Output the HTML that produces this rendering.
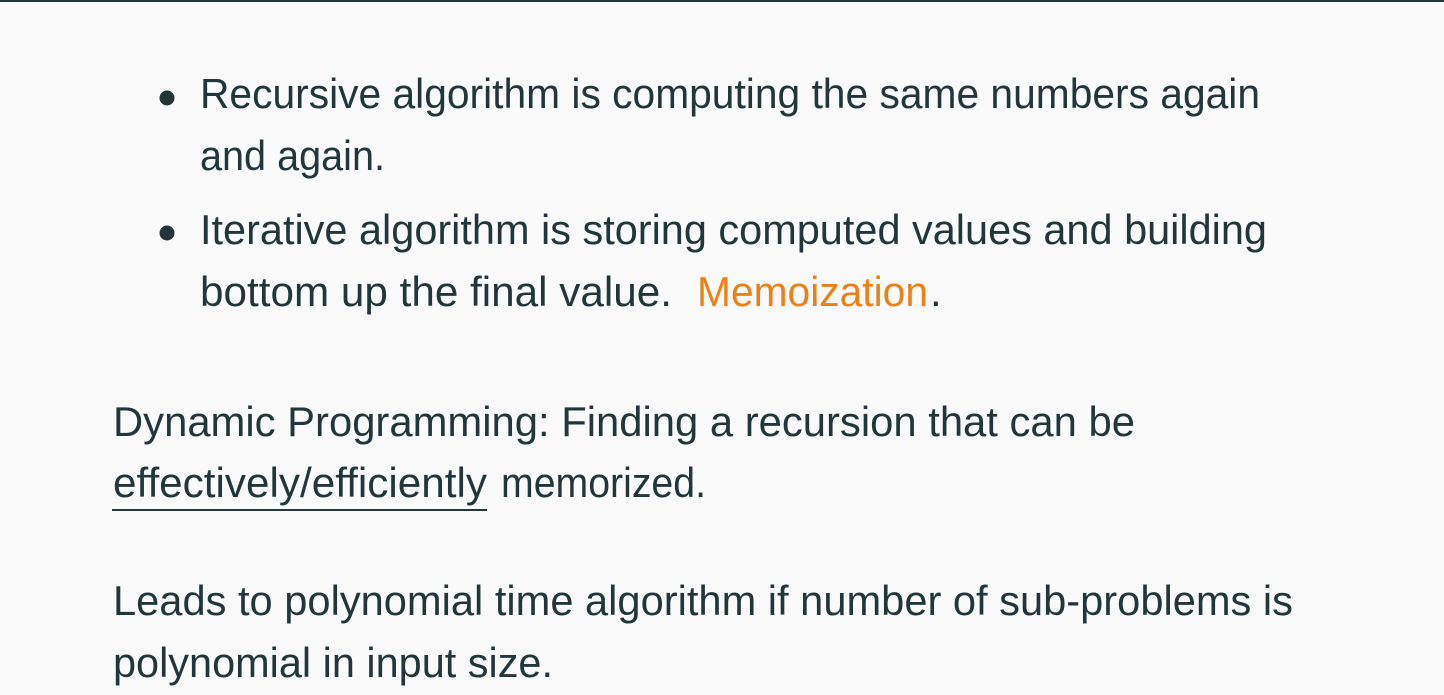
<!DOCTYPE html>
<html><head><meta charset="utf-8"><style>
html,body{margin:0;padding:0;background:#fafafa;}
svg{display:block}
text{font-family:"Liberation Sans",sans-serif;font-size:42px;fill:#23373b}
</style></head><body>
<svg width="1444" height="695" viewBox="0 0 1444 695">
<rect x="0" y="0" width="1444" height="695" fill="#fafafa"/>
<rect x="0" y="0" width="1444" height="2" fill="#23373b"/>
<circle cx="167" cy="98" r="7.5" fill="#23373b"/>
<circle cx="167" cy="233" r="7.5" fill="#23373b"/>
<text x="200" y="108" textLength="1060" lengthAdjust="spacingAndGlyphs">Recursive algorithm is computing the same numbers again</text>
<text x="200" y="170" textLength="185" lengthAdjust="spacingAndGlyphs">and again.</text>
<text x="200" y="244" textLength="1067" lengthAdjust="spacingAndGlyphs">Iterative algorithm is storing computed values and building</text>
<text x="200" y="306" textLength="472" lengthAdjust="spacingAndGlyphs">bottom up the final value.</text>
<text x="697" y="306" textLength="231" lengthAdjust="spacingAndGlyphs" style="fill:#eb811b">Memoization</text>
<text x="930" y="306">.</text>
<text x="113" y="436" textLength="1022" lengthAdjust="spacingAndGlyphs">Dynamic Programming: Finding a recursion that can be</text>
<text x="113" y="497" textLength="374" lengthAdjust="spacingAndGlyphs">effectively/efficiently</text>
<rect x="112" y="509" width="375" height="2" fill="#23373b"/>
<text x="501" y="497" textLength="205" lengthAdjust="spacingAndGlyphs">memorized.</text>
<text x="113" y="615" textLength="1180" lengthAdjust="spacingAndGlyphs">Leads to polynomial time algorithm if number of sub-problems is</text>
<text x="113" y="677" textLength="440" lengthAdjust="spacingAndGlyphs">polynomial in input size.</text>
</svg>
</body></html>
